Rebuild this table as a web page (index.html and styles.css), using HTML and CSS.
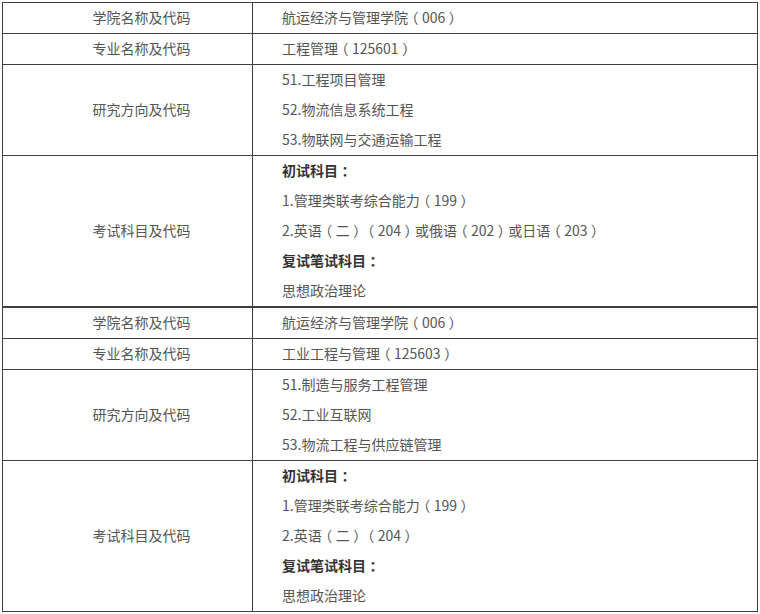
FILE: index.html
```html
<!DOCTYPE html>
<html lang="zh-CN">
<head>
<meta charset="utf-8">
<link rel="stylesheet" href="styles.css">
</head>
<body>
<div class="page">
  <table class="info">
    <colgroup><col class="c1"><col class="c2"></colgroup>
    <tr><td class="label"><p>学院名称及代码</p></td><td class="val"><p>航运经济与管理学院<span class="pu">（</span>006<span class="pu">）</span></p></td></tr>
    <tr><td class="label"><p>专业名称及代码</p></td><td class="val"><p>工程管理<span class="pu">（</span>125601<span class="pu">）</span></p></td></tr>
    <tr><td class="label"><p>研究方向及代码</p></td><td class="val"><p>51.工程项目管理</p><p>52.物流信息系统工程</p><p>53.物联网与交通运输工程</p></td></tr>
    <tr><td class="label"><p>考试科目及代码</p></td><td class="val"><p class="b">初试科目<span class="pu">：</span></p><p>1.管理类联考综合能力<span class="pu">（</span>199<span class="pu">）</span></p><p>2.英语<span class="pu">（</span>二<span class="pu">）</span><span class="pu">（</span>204<span class="pu">）</span>或俄语<span class="pu">（</span>202<span class="pu">）</span>或日语<span class="pu">（</span>203<span class="pu">）</span></p><p class="b">复试笔试科目<span class="pu">：</span></p><p>思想政治理论</p></td></tr>
  </table>
  <table class="info">
    <colgroup><col class="c1"><col class="c2"></colgroup>
    <tr><td class="label"><p>学院名称及代码</p></td><td class="val"><p>航运经济与管理学院<span class="pu">（</span>006<span class="pu">）</span></p></td></tr>
    <tr><td class="label"><p>专业名称及代码</p></td><td class="val"><p>工业工程与管理<span class="pu">（</span>125603<span class="pu">）</span></p></td></tr>
    <tr><td class="label"><p>研究方向及代码</p></td><td class="val"><p>51.制造与服务工程管理</p><p>52.工业互联网</p><p>53.物流工程与供应链管理</p></td></tr>
    <tr><td class="label"><p>考试科目及代码</p></td><td class="val"><p class="b">初试科目<span class="pu">：</span></p><p>1.管理类联考综合能力<span class="pu">（</span>199<span class="pu">）</span></p><p>2.英语<span class="pu">（</span>二<span class="pu">）</span><span class="pu">（</span>204<span class="pu">）</span></p><p class="b">复试笔试科目<span class="pu">：</span></p><p>思想政治理论</p></td></tr>
  </table>
</div>
</body>
</html>
```
FILE: styles.css
```css
html, body {
  margin: 0;
  padding: 0;
  background: #fff;
}
.page {
  padding: 2px 0 0 2px;
  font-family: "Microsoft YaHei", "Noto Sans CJK SC", "Noto Sans", sans-serif;
  font-size: 14px;
  color: #555;
}
.info {
  border-collapse: separate;
  border-spacing: 0;
  table-layout: fixed;
  width: 756px;
  border-top: 1px solid #404040;
  border-left: 1px solid #404040;
}
.c1 { width: 250px; }
.c2 { width: 505px; }
.info td {
  border-right: 1px solid #404040;
  border-bottom: 1px solid #404040;
  padding: 0;
  vertical-align: middle;
}
.info p {
  margin: 0;
  height: 28px;
  line-height: 28px;
  padding-bottom: 2px;
  white-space: nowrap;
}
.label {
  text-align: center;
  padding-left: 28px !important;
}
.val {
  padding-left: 29px !important;
}
.val p.b {
  font-weight: bold;
  color: #333;
}
.pu {
  display: inline-block;
  width: 14px;
  text-align: center;
  font-feature-settings: "halt" 1;
}
```
